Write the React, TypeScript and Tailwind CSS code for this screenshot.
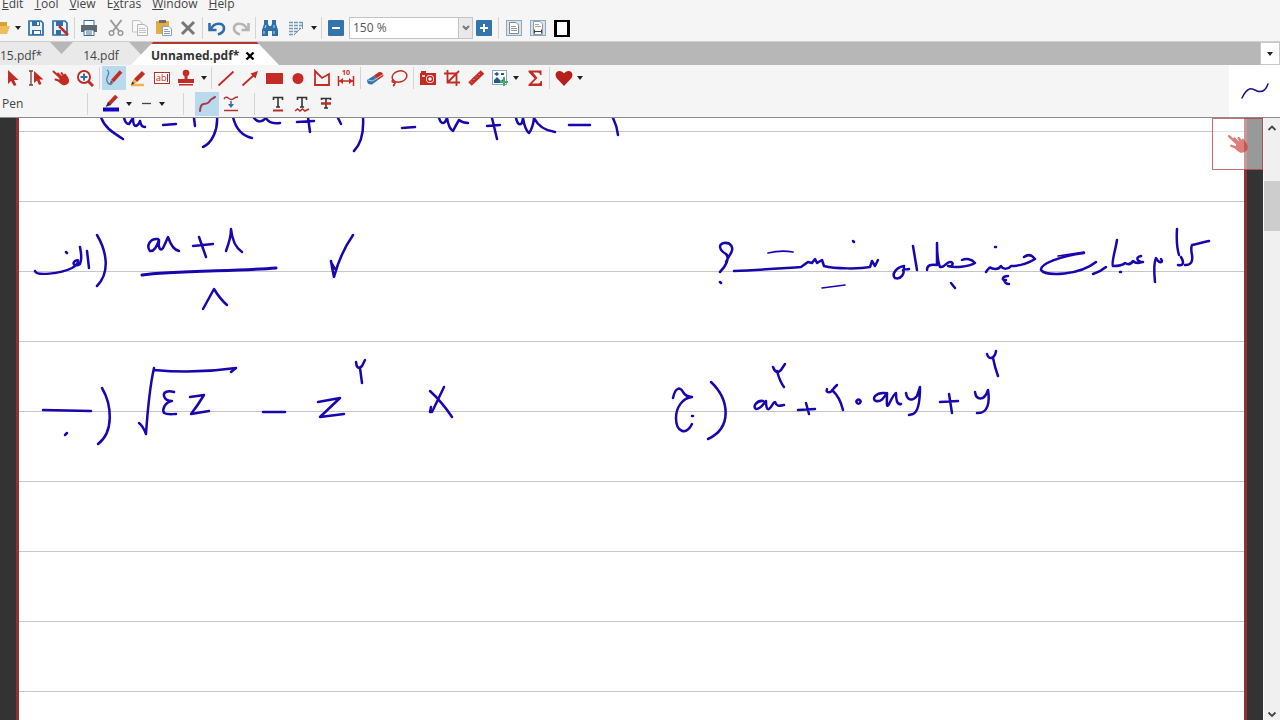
import type { ReactNode } from 'react';

const menus = [
  { before: '', key: 'E', rest: 'dit' },
  { before: '', key: 'T', rest: 'ool' },
  { before: '', key: 'V', rest: 'iew' },
  { before: 'E', key: 'x', rest: 'tras' },
  { before: '', key: 'W', rest: 'indow' },
  { before: '', key: 'H', rest: 'elp' },
];

// Pen strokes on the page, one group per written line
const ink = [
  // expression cut off by the top of the view
  'M101 117 C104 127 112 132 123 139',
  'M124 117 Q125 124 129 124 L133 118 Q133 126 136 126 Q139 125 140 121 Q141 127 145 127',
  'M163 125 L176 124 M194 118 L195 126',
  'M217 117 C218 130 212 143 203 147',
  'M233 117 C236 130 243 136 252 138',
  'M254 118 C258 123 262 122 266 118 C268 122 273 124 280 123',
  'M297 122 L314 121 M308 117 L310 132 M338 118 L341 124',
  'M363 117 C364 133 360 145 354 151',
  'M402 128 L415 127',
  'M439 118 Q441 125 445 122 L447 118 Q449 129 453 131 Q456 125 459 120 Q463 123 468 123',
  'M487 126 L500 125 M492 118 L497 139',
  'M516 118 Q518 127 522 123 L523 118 Q525 130 529 133 Q533 128 534 118 Q540 130 555 132',
  'M569 125 L590 125 M613 118 Q617 126 618 135',
  // first option
  'M35 271 C36 276 60 274 72 268 C79 264 80 258 75 261 C71 264 76 267 80 264 C82 260 81 252 80 247',
  'M87 251 L89 268 M66 252 L67 253',
  'M97 235 C106 250 111 272 97 286',
  'M158 239 C150 238 146 246 150 251 C154 252 157 246 159 240 C158 247 160 252 163 248 C166 242 167 239 168 237 C170 243 174 250 179 251',
  'M193 246 L213 244 M199 237 L206 257',
  'M226 251 C229 243 231 233 231 229 C232 239 236 248 242 252',
  'M203 309 L214 289 Q220 299 227 305',
  'M331 261 Q332 268 334 277 Q340 254 353 235 M331 262 L335 269',
  // second option
  'M43 410 L91 411 M65 435 L67 433',
  'M102 388 C112 405 114 432 98 444',
  'M139 423 Q143 426 146 434 Q149 390 154 368 L154 370 Q195 374 236 368 L231 372',
  'M174 392 C168 390 163 392 164 396 C165 400 168 401 172 401 C165 402 162 409 164 413 C168 415 172 414 176 414',
  'M190 397 L204 395 Q198 405 191 414 L209 411',
  'M263 412 L285 412',
  'M318 402 L340 398 L320 417 L344 414',
  'M356 362 Q357 371 362 366 L365 360 M360 368 L362 383',
  'M430 391 Q442 402 452 417 M444 387 L432 412 L430 412 L431 407',
  // question
  'M720 272 C726 266 730 258 726 254 C719 250 718 244 724 243 C731 242 734 248 731 253 C729 256 728 258 726 262 M720 282 L721 283',
  'M734 271 C760 270 785 268 801 267 L808 262 L812 263 L815 259 L817 263 L822 260 L824 266 C835 269 860 269 870 267 L872 261 L875 266 L878 260',
  'M853 241 L854 242',
  'M909 269 C905 270 903 269 904 266 C897 267 891 274 895 278 C901 280 905 273 903 270 M913 246 L917 270',
  'M927 270 C927 265 931 264 937 265 C937 257 937 249 937 243 C937 252 938 262 940 267 C945 268 946 262 950 262 C955 262 952 268 948 266 C955 268 968 267 975 263 C972 259 966 258 962 260',
  'M951 283 L955 288',
  'M986 272 Q990 266 991 268 C996 270 999 269 1001 266 C1003 270 1009 269 1011 266 C1018 266 1027 264 1035 259 C1032 255 1028 254 1024 257 M995 247 L996 247',
  'M1008 276 C1002 276 1001 281 1006 280 M1004 280 Q1005 284 1009 284',
  'M1084 253 C1060 256 1040 264 1041 270 C1046 277 1080 275 1096 262',
  'M1093 274 Q1100 272 1106 267',
  'M1117 240 C1115 252 1111 264 1113 266 C1118 266 1122 266 1125 263 Q1130 266 1133 261 C1137 265 1141 262 1143 262 C1137 262 1135 257 1141 256 M1120 272 L1121 272',
  'M1155 282 C1154 272 1154 262 1156 258 C1159 264 1164 263 1161 259',
  'M1177 229 Q1176 245 1179 255',
  'M1178 265 C1184 266 1184 262 1181 257 M1185 265 C1191 265 1193 262 1192 255 C1191 250 1191 247 1192 245 C1198 244 1203 242 1209 241',
  // third option
  'M673 398 C675 388 680 386 683 392 C686 397 690 397 692 397 C682 398 676 408 676 418 C676 432 686 436 692 424 M692 416 L693 416',
  'M711 382 C730 400 732 428 708 439',
  'M763 401 C757 400 752 407 756 409 C761 409 764 403 766 401 C766 407 767 410 769 409 C772 407 773 402 775 402 C777 407 779 406 784 405',
  'M773 367 Q776 375 781 370 L785 364 M777 371 Q780 382 784 387',
  'M798 410 L815 409 M806 403 L809 414',
  'M827 389 C825 393 831 394 834 388 L837 385 M832 390 Q840 397 843 410',
  'M857 403 A2 2 0 1 1 860 403 A2 2 0 0 1 857 403',
  'M885 393 C876 392 871 399 876 401 C882 402 884 397 887 393 C887 400 886 410 889 404 C893 396 895 393 896 393 C896 400 897 405 901 404',
  'M906 393 C907 400 912 402 917 396 L920 387 C920 400 918 412 913 414 L909 415',
  'M940 402 L958 401 M949 394 L952 413',
  'M975 392 C976 400 984 402 988 390 C990 402 988 414 977 413',
  'M987 354 C989 361 995 358 996 351 M993 358 Q995 368 998 376',
];

const heavyInk = 'M142 275 C170 271 240 271 276 268';
const lightInk = 'M768 253 Q781 250 793 252 M822 288 L845 285 M1058 256 L1084 252';

const RED = '#c42b24';
const BLUE = '#2f6ea8';

function Icon({ children }: { children: ReactNode }) {
  return (
    <svg viewBox="0 0 20 20" className="size-5 shrink-0" fill="none" aria-hidden="true">
      {children}
    </svg>
  );
}

function Tool({ label, active, children }: { label: string; active?: boolean; children: ReactNode }) {
  return (
    <button
      type="button"
      aria-label={label}
      aria-pressed={active}
      className={`flex h-6 w-6 shrink-0 items-center justify-center ${active ? 'bg-[#b9d9ec]' : ''}`}
    >
      <Icon>{children}</Icon>
    </button>
  );
}

function Caret({ label }: { label: string }) {
  return (
    <button type="button" aria-label={label} className="flex h-6 w-[11px] shrink-0 items-center justify-center">
      <svg viewBox="0 0 6 4" className="h-1 w-1.5" aria-hidden="true">
        <path d="M0 0H6L3 4Z" fill="#222" />
      </svg>
    </button>
  );
}

function Separator() {
  return (
    <div className="flex w-[5px] shrink-0 justify-center">
      <div className="h-[22px] w-px bg-[#d4d4d4]" />
    </div>
  );
}

function HandShape() {
  return (
    <>
      <path
        d="M2.500 3.500 9 9.500 M7 5.500 12 10.500 M10.500 5 14 10 M14 6.500 16 10 M4.500 11.500 9 13"
        stroke={RED}
        strokeWidth="2"
        strokeLinecap="round"
      />
      <path d="M8 8.500 L12 7.500 L16.500 8.500 Q19 12 17.500 15 Q15 18 11.500 17 Q8.500 15.500 6 12 L8.500 12 Z" fill={RED} />
    </>
  );
}

function MenuBar() {
  return (
    <nav className="flex h-3.5 items-end gap-[11px] pl-0.5">
      {menus.map((menu) => (
        <button key={menu.rest} type="button" className="mb-0.5 shrink-0 leading-4">
          {menu.before}
          <u>{menu.key}</u>
          {menu.rest}
        </button>
      ))}
    </nav>
  );
}

function MainToolbar() {
  return (
    <div className="flex h-7 items-center border-b border-[#d0d0d0]">
      <button type="button" aria-label="Open" className="flex h-6 w-3 items-center">
        <svg viewBox="0 0 12 20" className="h-5 w-3" aria-hidden="true">
          <path d="M0 4H7V8H0Z" fill="#d9a036" />
          <path d="M0 8H10L7 16H0Z" fill="#efbd5b" />
        </svg>
      </button>
      <Caret label="Recent files" />
      <div className="ml-px flex">
        <Tool label="Save">
          <path d="M3 3H15L17 5V17H3Z" stroke={BLUE} strokeWidth="1.700" fill="#eaf2fa" />
          <path d="M6 3H14V8H6Z M6 12H15V17H6Z" fill={BLUE} />
          <path d="M11 4H13V7H11Z M8 13H14V16H8Z" fill="#fff" />
        </Tool>
        <Tool label="Save as">
          <path d="M3 3H15L17 5V17H3Z" stroke={BLUE} strokeWidth="1.700" fill="#eaf2fa" />
          <path d="M6 3H13V8H6Z M6 12H11V17H6Z" fill={BLUE} />
          <path d="M9 8 L18 17" stroke={RED} strokeWidth="2.500" />
        </Tool>
      </div>
      <Separator />
      <Tool label="Print">
        <path d="M5 2.500H15V8H5Z" fill="#fff" stroke={BLUE} />
        <path d="M2 7H18V14H2Z" fill="#62686d" />
        <path d="M5 12H15V17.500H5Z" fill="#fff" stroke={BLUE} />
        <path d="M7 14H13 M7 16H13" stroke="#62686d" />
      </Tool>
      <div className="ml-[3px] flex">
        <Tool label="Cut">
          <path d="M4.500 2 L13 13 M15.500 2 L7 13" stroke="#9a9a9a" strokeWidth="2" />
          <circle cx="5.500" cy="15" r="2.300" stroke="#9a9a9a" strokeWidth="1.500" />
          <circle cx="14.500" cy="15" r="2.300" stroke="#9a9a9a" strokeWidth="1.500" />
        </Tool>
        <Tool label="Copy">
          <path d="M2.500 2.500H9L12 5V14H2.500Z" fill="#f8f8f8" stroke="#c2c2c2" />
          <path d="M7.500 6.500H14L17.500 9V17.500H7.500Z" fill="#f8f8f8" stroke="#b5b5b5" />
          <path d="M9 10.500H15 M9 12.500H16 M9 14.500H16" stroke="#c4c4c4" />
        </Tool>
        <Tool label="Paste">
          <path d="M2 3H15V16H2Z" fill="#e3ad45" />
          <path d="M5 2H12V5H5Z" fill="#6d6d6d" />
          <path d="M8.500 8.500H15L17.500 11V17.500H8.500Z" fill="#fff" stroke="#8aa4ba" />
          <path d="M10 11.500H14 M10 13.500H16 M10 15.500H16" stroke="#8aa4ba" />
        </Tool>
        <Tool label="Delete">
          <path d="M4 4 L16 16 M16 4 L4 16" stroke="#777" strokeWidth="3" />
        </Tool>
      </div>
      <Separator />
      <Tool label="Undo">
        <path d="M2.500 5V12H9.500" stroke={BLUE} strokeWidth="2.600" />
        <path d="M4 11 C7 4 17 4 17 10.500 C17 14 14 15.500 11 16.500" stroke={BLUE} strokeWidth="2.600" />
      </Tool>
      <Tool label="Redo">
        <path d="M17.500 5V12H10.500" stroke="#b5b5b5" strokeWidth="2.600" />
        <path d="M16 11 C13 4 3 4 3 10.500 C3 14 6 15.500 9 16.500" stroke="#b5b5b5" strokeWidth="2.600" />
      </Tool>
      <Separator />
      <Tool label="Find">
        <path d="M4 2H8V6L9 8H11L12 6V2H16V6L18 12V18H12V13H8V18H2V12L4 6Z" fill={BLUE} />
        <path d="M4 13V16 M14 13V16 M6 7L5 10 M14 7V10" stroke="#a9cbe5" strokeWidth="1.200" />
      </Tool>
      <div className="ml-0.5 flex">
        <Tool label="Highlight fields">
          <path d="M3 4.500H17 M3 7.500H16 M3 10.500H15 M3 13.500H12 M3 16.500H9" stroke="#6f97b9" strokeWidth="1.500" strokeDasharray="4 1" />
          <path d="M16.500 4V11 M14 11L9 16" stroke="#6f97b9" />
        </Tool>
      </div>
      <Caret label="Highlight options" />
      <Separator />
      <button type="button" aria-label="Zoom out" className="ml-0.5 flex w-5 justify-center">
        <svg viewBox="0 0 16 16" className="size-4" aria-hidden="true">
          <rect width="16" height="16" rx="1" fill="#3474ae" />
          <path d="M4 8H12" stroke="#fff" strokeWidth="2" />
        </svg>
      </button>
      <div className="relative ml-[3px] h-[22px] w-[124px] border border-[#c4c4c4] bg-white">
        <select
          aria-label="Zoom"
          className="block h-5 w-full appearance-none bg-transparent pl-[3px] text-[12px] leading-5 text-[#555] outline-none"
        >
          <option>150 %</option>
        </select>
        <span className="pointer-events-none absolute inset-y-0 right-0 flex w-[14px] items-center justify-center border-l border-[#c4c4c4] bg-[#e9e9e9]">
          <svg viewBox="0 0 10 8" className="h-2 w-2.5" fill="none" aria-hidden="true">
            <path d="M2 2 L5 5 L8 2" stroke="#777" strokeWidth="2" />
          </svg>
        </span>
      </div>
      <button type="button" aria-label="Zoom in" className="flex w-[22px] justify-center">
        <svg viewBox="0 0 16 16" className="size-4" aria-hidden="true">
          <rect width="16" height="16" rx="1" fill="#3474ae" />
          <path d="M4 8H12 M8 4V12" stroke="#fff" strokeWidth="2" />
        </svg>
      </button>
      <div className="mx-px flex">
        <Separator />
      </div>
      <Tool label="Fit page">
        <rect x="2.500" y="2.500" width="15" height="15" fill="#d6e4ef" stroke="#8aa9c3" />
        <path d="M5.500 4.500H12L14.500 7V15.500H5.500Z" fill="#fff" stroke="#888" />
        <path d="M7 8.500H12 M7 10.500H13 M7 12.500H13" stroke="#999" />
      </Tool>
      <Tool label="Fit width">
        <rect x="2.500" y="2.500" width="15" height="15" fill="#d6e4ef" stroke="#8aa9c3" />
        <path d="M5.500 3.500H12L14.500 6V16.500H5.500Z" fill="#fff" stroke="#999" />
        <path d="M7 6.500H11 M7 8.500H13" stroke="#aaa" />
        <path d="M6 13.500H14 M6.500 11.500V15.500 M13.500 11.500V15.500" stroke="#444" />
      </Tool>
      <Tool label="Full screen">
        <rect x="2" y="2" width="16" height="17" fill="#000" />
        <rect x="5" y="4" width="10" height="13" fill="#fff" />
      </Tool>
    </div>
  );
}

function TabBar() {
  return (
    <div className="flex h-[23px] justify-between bg-[#b7b7b7]">
      <div className="flex">
        <button
          type="button"
          className="h-[23px] w-[72px] bg-[#e9e9e9] pt-1 text-left [clip-path:polygon(0_0,50px_0,100%_100%,0_100%)]"
        >
          15.pdf*
        </button>
        <button
          type="button"
          className="-ml-[21px] h-[23px] w-[100px] bg-[#e9e9e9] pt-1 text-center [clip-path:polygon(22px_0,78px_0,100%_100%,0_100%)]"
        >
          14.pdf
        </button>
        <div className="-ml-5 flex h-[23px] w-[148px] items-center border-t-2 border-[#b3372e] bg-white pt-0.5 pl-5 [clip-path:polygon(22px_0,126px_0,100%_100%,0_100%)]">
          <button type="button" className="font-bold text-[#333]">
            Unnamed.pdf*
          </button>
          <button type="button" aria-label="Close tab" className="ml-1.5 flex items-center">
            <svg viewBox="0 0 10 10" className="size-2.5" fill="none" aria-hidden="true">
              <path d="M1.500 1.500 L8.500 8.500 M8.500 1.500 L1.500 8.500" stroke="#000" strokeWidth="2.400" />
            </svg>
          </button>
        </div>
      </div>
      <div className="flex w-5 items-center justify-center border border-[#c8c8c8] bg-white">
        <Caret label="All tabs" />
      </div>
    </div>
  );
}

function DrawingTools() {
  return (
    <div className="flex h-[26px] items-center pl-px">
      <Tool label="Select">
        <path d="M5 2 V16 L8 13 L11 18 L13.500 17 L11 12 H15.500 Z" fill={RED} />
      </Tool>
      <Tool label="Select text">
        <path d="M2 3H6 M4 3V17 M2 17H6" stroke="#7b3a38" strokeWidth="1.300" />
        <path d="M7 3 V15 L10 12.500 L12 17 L14.500 16 L12.500 11.500 H16.500 Z" fill={RED} />
      </Tool>
      <Tool label="Hand">
        <HandShape />
      </Tool>
      <Tool label="Zoom tool">
        <circle cx="9" cy="9" r="6" stroke={RED} strokeWidth="2" fill="#fff" />
        <path d="M13 13 L18 18" stroke={RED} strokeWidth="3" />
        <path d="M9 5.500V12.500 M5.500 9H12.500" stroke={BLUE} strokeWidth="2" />
      </Tool>
      <Separator />
      <Tool label="Pen" active>
        <path d="M3 2 C8 5 1 9 3 13 C4 17 8 17 8 15" stroke="#3f86bd" strokeWidth="1.300" />
        <path d="M17 3.500 L8.500 13" stroke={RED} strokeWidth="3.600" />
        <path d="M7 12 L5.500 16 L9.500 14.500 Z" fill="#7a5b5b" />
      </Tool>
      <Tool label="Highlighter">
        <path d="M3 17H16" stroke="#f0b34b" strokeWidth="2.500" />
        <path d="M15.500 4.500 L7.500 12.500" stroke={RED} strokeWidth="4.500" />
        <path d="M5.500 11 L3 17 L9 14.500 Z" fill="#f0b34b" />
        <path d="M4.500 13.500 L3 17 L6.500 15.500 Z" fill="#333" />
      </Tool>
      <Tool label="Text box">
        <rect x="2.500" y="4.500" width="15" height="11" fill="#fff" stroke={RED} />
        <text x="4" y="13" fontSize="9" fill={RED}>
          ab
        </text>
        <path d="M15.500 6V14" stroke={RED} />
      </Tool>
      <Tool label="Stamp">
        <circle cx="10" cy="5" r="3.300" fill={RED} />
        <path d="M8.500 7H11.500V11H18V15H2V11H8.500Z M3 16H17V17.500H3Z" fill={RED} />
      </Tool>
      <Caret label="Stamp options" />
      <Separator />
      <Tool label="Line">
        <path d="M2.500 17.500 L17.500 3.500" stroke={RED} strokeWidth="1.800" />
      </Tool>
      <Tool label="Arrow">
        <path d="M2.500 17.500 L14 7" stroke={RED} strokeWidth="1.800" />
        <path d="M18 3 L10.500 5.500 L15.500 10.500 Z" fill={RED} />
      </Tool>
      <Tool label="Rectangle">
        <rect x="2" y="5" width="17" height="11" fill={RED} />
      </Tool>
      <Tool label="Ellipse">
        <circle cx="10" cy="10.500" r="5.500" fill={RED} />
      </Tool>
      <Tool label="Polygon">
        <path d="M3 3 L10 10 L17 6 V17 H3 Z" stroke={RED} strokeWidth="1.800" />
      </Tool>
      <Tool label="Measure">
        <text x="6" y="7" fontSize="7" fontWeight="700" fill={RED}>
          10
        </text>
        <path d="M2.500 8V18 M17.500 8V18 M3 13H17" stroke={RED} strokeWidth="1.500" />
        <path d="M3 13 L7 10V16Z M17 13 L13 10V16Z" fill={RED} />
      </Tool>
      <Separator />
      <Tool label="Eraser">
        <path d="M2 12 L9 7.500 L13 12 L7 16.500 Q2 17 2 12Z" fill="#3574ad" />
        <path d="M9 7.500 L14 4 Q18 3.500 18.500 8 L13 12Z" fill={RED} />
        <path d="M3 12 L7.500 13 L18 6.500" stroke="#d9e4ee" strokeWidth="0.800" />
      </Tool>
      <Tool label="Lasso">
        <ellipse cx="10.500" cy="8.500" rx="7.500" ry="5.500" stroke={RED} strokeWidth="1.500" transform="rotate(-15 10.500 8.500)" />
        <path d="M5 12 C2 12 3 15 5 14 C7 13 6 17 4 18" stroke={RED} strokeWidth="1.500" />
      </Tool>
      <Separator />
      <Tool label="Snapshot">
        <path d="M3 3H8V5H18V17H2V5H3Z" fill={RED} />
        <circle cx="12" cy="11" r="4" fill="#fff" />
        <circle cx="12" cy="11" r="2.500" stroke={RED} strokeWidth="1.500" />
        <path d="M4 8H7" stroke="#fff" strokeWidth="1.500" />
      </Tool>
      <Tool label="Crop">
        <path d="M5.500 2V14.500H18 M2 5.500H14.500V18 M6 14 L17 3" stroke={RED} strokeWidth="1.800" />
      </Tool>
      <Tool label="Ruler">
        <path d="M4 16 L16.500 4" stroke={RED} strokeWidth="5" />
        <path d="M5 13.500 L6 14.500 M7.500 11 L8.500 12 M10 8.500 L11 9.500 M12.500 6 L13.500 7" stroke="#f0aaa6" />
      </Tool>
      <Tool label="Insert image">
        <rect x="2.500" y="2.500" width="14" height="14" fill="#fff" stroke="#8aa9c3" />
        <path d="M4 15 V12 L7 9 L11 13 L13 11 V15Z M4 6 L7 4 L9 6 L7 8Z M11 5H14V7H11Z" fill="#25578a" />
        <path d="M14 9V18 M10 14H18" stroke="#3fae62" strokeWidth="2" />
      </Tool>
      <div className="-ml-0.5 flex">
        <Caret label="Image options" />
      </div>
      <div className="ml-0.5 flex">
        <Tool label="Formula">
          <path
            d="M3.500 2.500H16.500V7H15Q15 4.500 12.500 4.500H8L12.500 10L7 15.500H13Q15.500 15.500 15.500 13H17V18H3.500V16.500L9.500 10.500L3.500 4Z"
            fill={RED}
          />
        </Tool>
      </div>
      <Separator />
      <Tool label="Favorites">
        <path d="M10 18 L2.500 10 C-1 4 6 0 10 5.500 C14 0 21 4 17.500 10Z" fill="#b71f1a" />
      </Tool>
      <div className="-ml-0.5 flex">
        <Caret label="Favorite tools" />
      </div>
    </div>
  );
}

function PenOptions() {
  return (
    <div className="flex h-[26px] items-center">
      <span className="w-[85px] pl-0.5">Pen</span>
      <Separator />
      <div className="ml-[9px] flex">
        <Tool label="Pen color">
          <path d="M15.500 2 L8 10" stroke={RED} strokeWidth="4" />
          <path d="M7 8 L4.500 13 L10 11 Z" fill="#333" />
          <path d="M2 15.500H18" stroke="#1400c8" strokeWidth="4" />
        </Tool>
      </div>
      <Caret label="Choose color" />
      <Tool label="Line width">
        <path d="M6 9.500H15" stroke="#444" strokeWidth="1.300" />
      </Tool>
      <div className="-ml-0.5 flex">
        <Caret label="Choose line width" />
      </div>
      <div className="mr-[9px] ml-3.5 flex">
        <Separator />
      </div>
      <Tool label="Smooth stroke" active>
        <path d="M3 17 C4 6 9 12 12 8 C14 4 16 5 18 3" stroke="#a83a42" strokeWidth="2" strokeLinecap="round" />
      </Tool>
      <Tool label="Simplify stroke">
        <path d="M3 5 C6 0 9 8 12 5 C14 3 15 3 17 3" stroke="#b23235" strokeWidth="1.500" />
        <path d="M10 7V12" stroke={BLUE} strokeWidth="1.500" />
        <path d="M7 10H13L10 14Z" fill={BLUE} />
        <path d="M3 16.500H17" stroke="#b23235" strokeWidth="1.500" />
      </Tool>
      <div className="mx-[9px] flex">
        <Separator />
      </div>
      <Tool label="Underline">
        <path d="M5.500 6V3.500H14.500V6 M10 3.500V13 M8 13H12" stroke="#333" strokeWidth="1.600" />
        <path d="M5 16.500H15" stroke={RED} strokeWidth="2" />
      </Tool>
      <Tool label="Squiggly underline">
        <path d="M5.500 6V3.500H14.500V6 M10 3.500V13 M8 13H12" stroke="#333" strokeWidth="1.600" />
        <path d="M3 17 L5.500 15 L8 17 L10.500 15 L13 17 L17 15" stroke={RED} strokeWidth="1.600" />
      </Tool>
      <Tool label="Strikeout">
        <path d="M5.500 6V4.500H14.500V6 M10 4.500V14 M8 14H12" stroke="#333" strokeWidth="1.600" />
        <path d="M5 9.500H15" stroke={RED} strokeWidth="2.500" />
      </Tool>
    </div>
  );
}

function Paper() {
  return (
    <div className="relative h-full flex-1 overflow-hidden border-x-3 border-[#8f3031] bg-white">
      <div className="h-3.5 border-b border-[#c6c6c6]" />
      {[1, 2, 3, 4, 5, 6, 7, 8, 9, 10, 11, 12].map((line) => (
        <div key={line} className="h-[70px] border-b border-[#c6c6c6]" />
      ))}
      <svg
        viewBox="19 118 1226 602"
        className="absolute top-0 left-0 h-[602px] w-[1226px]"
        fill="none"
        stroke="#1806ae"
        strokeLinecap="round"
        strokeLinejoin="round"
        role="img"
        aria-label="Handwritten algebra notes"
      >
        {ink.map((stroke) => (
          <path key={stroke} d={stroke} strokeWidth="2.500" />
        ))}
        <path d={heavyInk} strokeWidth="3" />
        <path d={lightInk} strokeWidth="1.700" />
      </svg>
    </div>
  );
}

function ScrollBar() {
  return (
    <div className="flex w-[17px] shrink-0 flex-col border-l border-white bg-[#f0f0f0]">
      <button type="button" aria-label="Scroll up" className="flex h-5 items-center justify-center">
        <svg viewBox="0 0 10 8" className="h-2 w-2.5" fill="none" aria-hidden="true">
          <path d="M1.500 6 L5 2.500 L8.500 6" stroke="#444" strokeWidth="1.800" />
        </svg>
      </button>
      <div className="flex-1 pt-[43px]">
        <div className="h-[50px] bg-[#cdcdcd]" />
      </div>
      <button type="button" aria-label="Scroll down" className="flex h-3 items-center justify-center">
        <svg viewBox="0 0 10 8" className="h-2 w-2.5" fill="none" aria-hidden="true">
          <path d="M1.500 2.500 L5 6 L8.500 2.500" stroke="#444" strokeWidth="1.800" />
        </svg>
      </button>
    </div>
  );
}

export default function App() {
  return (
    <div className="flex h-screen flex-col overflow-hidden bg-[#f5f5f5] font-['Open_Sans','Noto_Sans',sans-serif] text-[12px] text-[#444]">
      <header className="shrink-0">
        <MenuBar />
        <MainToolbar />
        <TabBar />
        <div className="flex border-b border-[#8c8c8c]">
          <div className="flex-1">
            <DrawingTools />
            <PenOptions />
          </div>
          <div className="flex w-[51px] items-center justify-center bg-white">
            <svg viewBox="0 0 30 20" className="h-5 w-[30px]" fill="none" aria-hidden="true">
              <path d="M2 17 C8 4 13 8 17 10 C23 12 26 9 28 3" stroke="#1d1080" strokeWidth="1.500" strokeLinecap="round" />
            </svg>
          </div>
        </div>
      </header>
      <main className="flex min-h-0 flex-1">
        <div className="relative flex flex-1 bg-[#333] px-4">
          <Paper />
          <button
            type="button"
            aria-label="Toggle hand tool"
            className="absolute top-0 right-0 flex h-[52px] w-[51px] items-center justify-center border border-[#b23235]/70 bg-white/50"
          >
            <svg viewBox="0 0 20 20" className="size-6 opacity-60" fill="none" aria-hidden="true">
              <HandShape />
            </svg>
          </button>
        </div>
        <ScrollBar />
      </main>
    </div>
  );
}
